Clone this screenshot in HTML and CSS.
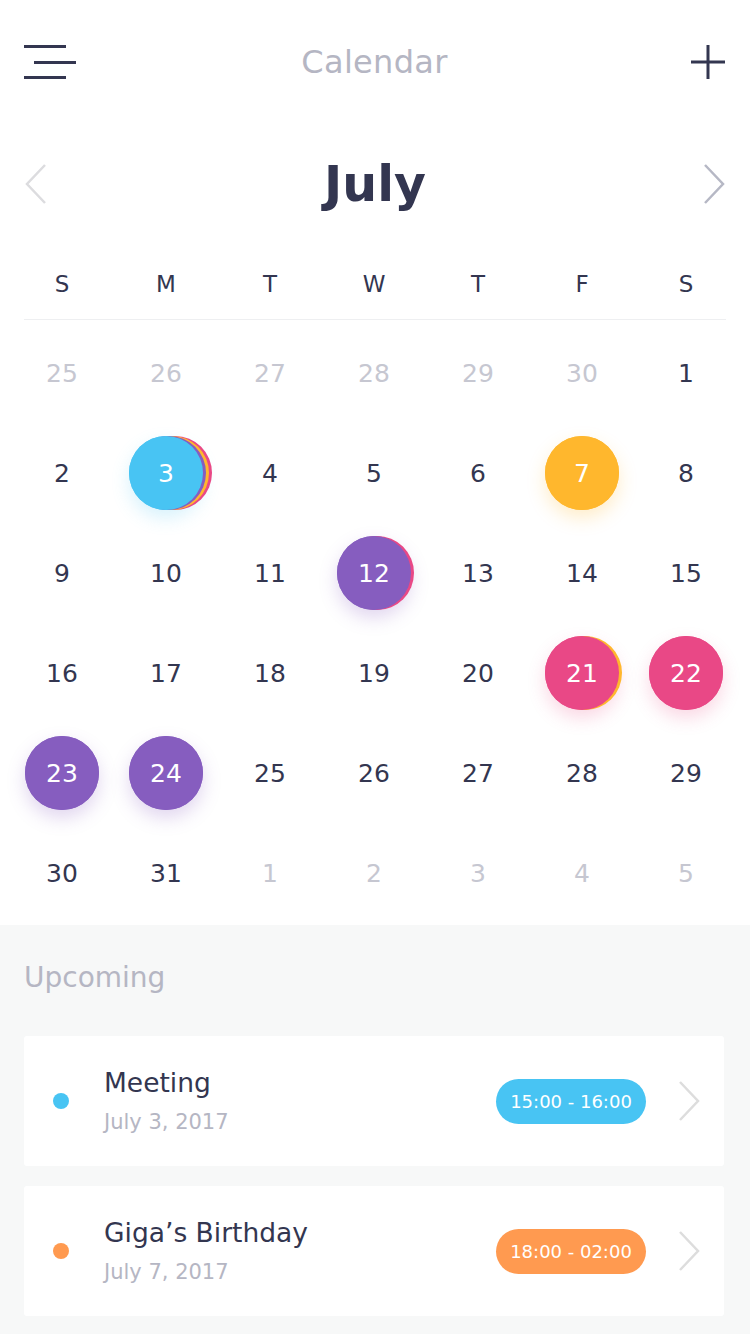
FILE: index.html
```html
<!DOCTYPE html>
<html>
<head>
<meta charset="utf-8">
<link rel="stylesheet" href="styles.css">
</head>
<body>
<div class="page">
  <header class="topbar">
    <svg class="icon-menu" width="54" height="36" viewBox="0 0 54 36">
      <rect x="0" y="0" width="42" height="3" fill="#333650"/>
      <rect x="10" y="16" width="42" height="3" fill="#333650"/>
      <rect x="0" y="31" width="42" height="3" fill="#333650"/>
    </svg>
    <div class="title">Calendar</div>
    <svg class="icon-plus" width="34" height="34" viewBox="0 0 34 34">
      <rect x="15.5" y="0" width="3" height="34" fill="#333650"/>
      <rect x="0" y="15.5" width="34" height="3" fill="#333650"/>
    </svg>
  </header>

  <section class="month">
    <svg class="arrow" width="24" height="42" viewBox="0 0 24 42">
      <polyline points="21,2 3,21 21,40" fill="none" stroke="#dcdcdf" stroke-width="2.5"/>
    </svg>
    <h1 class="month-name">July</h1>
    <svg class="arrow" width="24" height="42" viewBox="0 0 24 42">
      <polyline points="3,2 21,21 3,40" fill="none" stroke="#b6b8c5" stroke-width="2.5"/>
    </svg>
  </section>

  <div class="calendar">
    <div class="weekdays">
      <span>S</span><span>M</span><span>T</span><span>W</span><span>T</span><span>F</span><span>S</span>
    </div>
    <div class="divider"></div>
    <div class="days">
      <span class="day muted">25</span><span class="day muted">26</span><span class="day muted">27</span><span class="day muted">28</span><span class="day muted">29</span><span class="day muted">30</span><span class="day">1</span>
      <span class="day">2</span>
      <span class="day"><span class="ev ev-blue"><i class="l l3"></i><i class="l l2"></i><i class="l l1"></i><b>3</b></span></span>
      <span class="day">4</span><span class="day">5</span><span class="day">6</span>
      <span class="day"><span class="ev ev-orange"><b>7</b></span></span>
      <span class="day">8</span>
      <span class="day">9</span><span class="day">10</span><span class="day">11</span>
      <span class="day"><span class="ev ev-purple"><i class="l lp1"></i><b>12</b></span></span>
      <span class="day">13</span><span class="day">14</span><span class="day">15</span>
      <span class="day">16</span><span class="day">17</span><span class="day">18</span><span class="day">19</span><span class="day">20</span>
      <span class="day"><span class="ev ev-pink"><i class="l lo1"></i><b>21</b></span></span>
      <span class="day"><span class="ev ev-pink"><b>22</b></span></span>
      <span class="day"><span class="ev ev-purple"><b>23</b></span></span>
      <span class="day"><span class="ev ev-purple"><b>24</b></span></span>
      <span class="day">25</span><span class="day">26</span><span class="day">27</span><span class="day">28</span><span class="day">29</span>
      <span class="day">30</span><span class="day">31</span><span class="day muted">1</span><span class="day muted">2</span><span class="day muted">3</span><span class="day muted">4</span><span class="day muted">5</span>
    </div>
  </div>

  <section class="upcoming">
    <h2 class="upcoming-title">Upcoming</h2>
    <div class="card">
      <span class="dot dot-blue"></span>
      <div class="card-text">
        <div class="card-title">Meeting</div>
        <div class="card-date">July 3, 2017</div>
      </div>
      <span class="pill pill-blue">15:00 - 16:00</span>
      <svg class="chev" width="22" height="42" viewBox="0 0 22 42">
        <polyline points="2,2 20,21 2,40" fill="none" stroke="#dddddd" stroke-width="2.5"/>
      </svg>
    </div>
    <div class="card">
      <span class="dot dot-orange"></span>
      <div class="card-text">
        <div class="card-title">Giga’s Birthday</div>
        <div class="card-date">July 7, 2017</div>
      </div>
      <span class="pill pill-orange">18:00 - 02:00</span>
      <svg class="chev" width="22" height="42" viewBox="0 0 22 42">
        <polyline points="2,2 20,21 2,40" fill="none" stroke="#dddddd" stroke-width="2.5"/>
      </svg>
    </div>
  </section>
</div>
</body>
</html>
```

FILE: styles.css
```css
* { box-sizing: border-box; }
html, body { margin: 0; padding: 0; }
body {
  width: 750px;
  height: 1334px;
  overflow: hidden;
  background: #f7f8f8;
  font-family: "DejaVu Sans", "Noto Sans", sans-serif;
  color: #333650;
}
.page { width: 750px; }

.topbar {
  height: 124px;
  background: #fff;
  display: grid;
  grid-template-columns: 1fr auto 1fr;
  align-items: center;
  padding: 0 25px 0 24px;
}
.icon-menu { display: block; margin-top: 2px; justify-self: start; }
.icon-plus { display: block; justify-self: end; }
.title {
  font-size: 32px;
  color: #b5b6c3;
  letter-spacing: 0.3px;
}

.month {
  height: 120px;
  background: #fff;
  display: flex;
  align-items: center;
  justify-content: space-between;
  padding: 0 24px;
}
.arrow { display: block; }
.month-name {
  margin: 0;
  font-size: 49px;
  font-weight: bold;
  color: #333650;
  line-height: 1;
}

.calendar {
  background: #fff;
  padding: 0 12px 0 10px;
}
.weekdays {
  height: 75px;
  display: grid;
  grid-template-columns: repeat(7, 1fr);
  align-items: center;
  justify-items: center;
  padding-top: 4px;
  font-size: 23px;
}
.divider {
  height: 1px;
  background: #eeeff1;
  margin: 0 12px 0 14px;
}
.days {
  display: grid;
  grid-template-columns: repeat(7, 1fr);
  grid-auto-rows: 100px;
  padding: 3px 0 2px;
  font-size: 25px;
}
.day {
  display: flex;
  align-items: center;
  justify-content: center;
  color: #333650;
}
.day.muted { color: #c6c7d1; }

.ev {
  position: relative;
  width: 74px;
  height: 74px;
  border-radius: 50%;
  display: flex;
  align-items: center;
  justify-content: center;
  color: #fff;
}
.ev b {
  position: relative;
  font-weight: normal;
  z-index: 2;
}
.ev::before {
  content: "";
  position: absolute;
  inset: 0;
  border-radius: 50%;
  background: inherit;
  z-index: 1;
}
.ev-blue { background: #48c4f3; box-shadow: 0 8px 18px rgba(72,196,243,0.22); }
.ev-orange { background: #ffb72d; box-shadow: 0 8px 18px rgba(255,183,45,0.25); }
.ev-purple { background: #865dbf; box-shadow: 0 8px 18px rgba(134,93,191,0.25); }
.ev-pink { background: #e94886; box-shadow: 0 8px 18px rgba(233,72,134,0.22); }

.l {
  position: absolute;
  top: 0;
  left: 0;
  width: 74px;
  height: 74px;
  border-radius: 50%;
  z-index: 0;
}
.l1 { background: #865dbf; transform: translateX(3px); }
.l2 { background: #ffb72d; transform: translateX(6px); }
.l3 { background: #e94886; transform: translateX(9px); }
.lp1 { background: #e94886; transform: translateX(3px); }
.lo1 { background: #ffb72d; transform: translateX(3px); }

.upcoming {
  padding: 36px 26px 0 24px;
  background: #f7f8f8;
}
.upcoming-title {
  margin: 0 0 41px;
  font-size: 28px;
  font-weight: normal;
  line-height: 34px;
  color: #b5b6c3;
}
.card {
  height: 130px;
  background: #fff;
  border-radius: 3px;
  display: flex;
  align-items: center;
  padding: 0 24px 0 29px;
  margin-bottom: 20px;
}
.dot {
  width: 16px;
  height: 16px;
  border-radius: 50%;
  flex: none;
}
.dot-blue { background: #48c4f3; }
.dot-orange { background: #ff9a50; }
.card-text {
  margin-left: 35px;
  flex: 1;
  display: flex;
  flex-direction: column;
  gap: 7px;
}
.card-title {
  font-size: 26.5px;
  line-height: 34px;
  color: #333650;
}
.card-date {
  font-size: 21px;
  line-height: 30px;
  color: #b5b6c3;
}
.pill {
  width: 150px;
  height: 45px;
  border-radius: 23px;
  display: flex;
  align-items: center;
  justify-content: center;
  color: #fff;
  font-size: 18px;
}
.pill-blue { background: #48c4f3; }
.pill-orange { background: #ff9a50; }
.chev { display: block; margin-left: 32px; }
```
